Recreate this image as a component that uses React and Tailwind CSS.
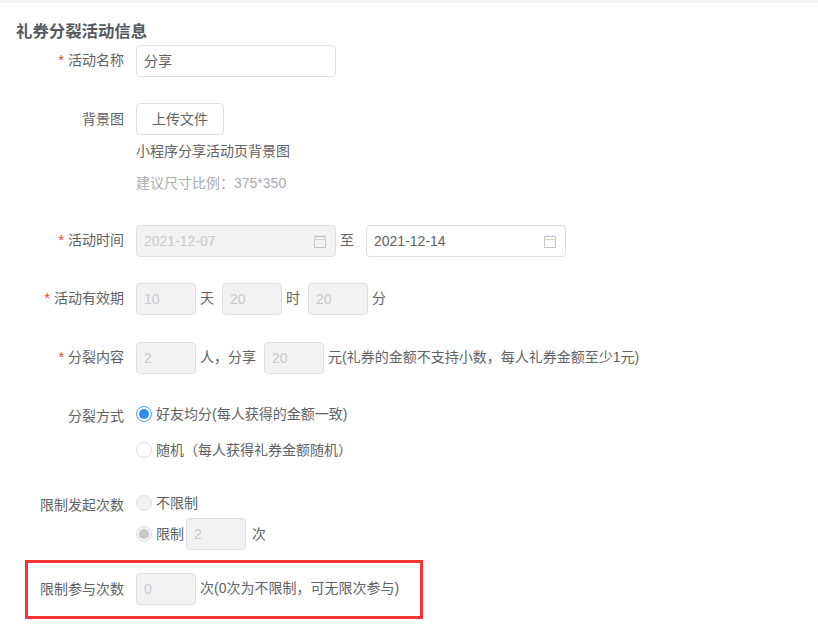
function Label({ required, className = '', children }) {
  return (
    <div className={`w-[124px] shrink-0 text-right leading-8 h-8 ${className}`}>
      {required && <span className="text-[#f5400f] mr-1">*</span>}
      {children}
    </div>
  )
}

function Box({ value, w = 'w-[60px]', disabled = true }) {
  return (
    <div className={`${w} h-8 shrink-0 rounded border border-[#dcdfe6] flex items-center px-[7px] ${disabled ? 'bg-[#f2f2f2] text-[#c8cacf]' : 'bg-white text-[#606266]'}`}>
      {value}
    </div>
  )
}

function Calendar() {
  return (
    <svg width="12" height="13" viewBox="0 0 12 13" fill="none" className="shrink-0" stroke="#c9c4cc" strokeWidth="1">
      <rect x="0.5" y="1.5" width="11" height="11" />
      <path d="M0.5 4.5H11.5" stroke="#d8d2b8" />
      <path d="M3 0V2.5M9 0V2.5" />
    </svg>
  )
}

function DateBox({ value, disabled }) {
  return (
    <div className={`w-[200px] h-8 shrink-0 rounded border border-[#dcdfe6] flex items-center justify-between pl-[7px] pr-[9px] ${disabled ? 'bg-[#f2f2f2] text-[#c8cacf]' : 'bg-white text-[#606266]'}`}>
      <span>{value}</span>
      <Calendar />
    </div>
  )
}

function Radio({ state }) {
  if (state === 'on') {
    return (
      <span className="w-4 h-4 rounded-full border border-[#409eff] bg-white flex items-center justify-center shrink-0">
        <span className="w-[10px] h-[10px] rounded-full bg-[#2d8cf0]" />
      </span>
    )
  }
  if (state === 'disabledOn') {
    return (
      <span className="w-4 h-4 rounded-full border border-[#dcdfe6] bg-[#f2f2f2] flex items-center justify-center shrink-0">
        <span className="w-[10px] h-[10px] rounded-full bg-[#c8c8c8]" />
      </span>
    )
  }
  return <span className={`w-4 h-4 rounded-full border border-[#dcdfe6] shrink-0 ${state === 'disabled' ? 'bg-[#f2f2f2]' : 'bg-white'}`} />
}

export default function App() {
  return (
    <div
      className="w-[818px] h-[634px] overflow-hidden bg-white text-[14px] text-[#606266]"
      style={{ fontFamily: '"Liberation Sans", "Noto Sans CJK SC", sans-serif' }}
    >
      <div className="h-[3px] bg-[#f3f3f3]" />

      <h2 className="ml-4 mt-[18px] h-5 leading-5 text-[16.4px] font-bold text-[#555a62]">礼券分裂活动信息</h2>

      <div className="flex gap-3 mt-[4px]">
        <Label required className="-translate-y-px">活动名称</Label>
        <Box value="分享" w="w-[200px]" disabled={false} />
      </div>

      <div className="flex gap-3 mt-[26px]">
        <Label>背景图</Label>
        <div>
          <button className="w-[88px] h-8 rounded border border-[#dcdfe6] bg-white text-[#606266]">上传文件</button>
          <div className="mt-[6px] h-5 leading-5">小程序分享活动页背景图</div>
          <div className="mt-3 h-5 leading-5 text-[#aaacb0]">建议尺寸比例：375*350</div>
        </div>
      </div>

      <div className="flex gap-3 mt-[32px]">
        <Label required className="-translate-y-px">活动时间</Label>
        <div className="flex items-center">
          <DateBox value="2021-12-07" disabled />
          <span className="w-[30px] pl-1 shrink-0 -translate-y-px">至</span>
          <DateBox value="2021-12-14" />
        </div>
      </div>

      <div className="flex gap-3 mt-[26px]">
        <Label required className="-translate-y-px">活动有效期</Label>
        <div className="flex items-center">
          <Box value="10" />
          <span className="w-[26px] pl-1 shrink-0 -translate-y-px">天</span>
          <Box value="20" />
          <span className="w-[26px] pl-1 shrink-0 -translate-y-px">时</span>
          <Box value="20" />
          <span className="pl-1 -translate-y-px">分</span>
        </div>
      </div>

      <div className="flex gap-3 mt-[27px]">
        <Label required className="-translate-y-px">分裂内容</Label>
        <div className="flex items-center">
          <Box value="2" />
          <span className="w-[68px] pl-1 shrink-0 -translate-y-px">人，分享</span>
          <Box value="20" />
          <span className="pl-1 -translate-y-px">元(礼券的金额不支持小数，每人礼券金额至少1元)</span>
        </div>
      </div>

      <div className="flex gap-3 mt-6">
        <Label className="translate-y-0.5">分裂方式</Label>
        <div>
          <div className="flex items-center gap-1 h-8">
            <Radio state="on" />
            <span>好友均分(每人获得的金额一致)</span>
          </div>
          <div className="flex items-center gap-1 h-8 mt-1">
            <Radio />
            <span>随机（每人获得礼券金额随机）</span>
          </div>
        </div>
      </div>

      <div className="flex gap-3 mt-[21px]">
        <Label className="translate-y-0.5">限制发起次数</Label>
        <div>
          <div className="flex items-center gap-1 h-8">
            <Radio state="disabled" />
            <span>不限制</span>
          </div>
          <div className="flex items-center mt-[-1px]">
            <Radio state="disabledOn" />
            <span className="ml-1 w-[30px]">限制</span>
            <Box value="2" />
            <span className="ml-1.5">次</span>
          </div>
        </div>
      </div>

      <div className="ml-[25px] mt-[10px] w-[398px] h-[59px] border-[3px] border-[#f93434] flex items-start pt-[10px] gap-3">
        <div className="w-[96px] shrink-0 text-right leading-8 h-8">限制参与次数</div>
        <div className="flex items-center">
          <Box value="0" />
          <span className="pl-1 -translate-y-px">次(0次为不限制，可无限次参与)</span>
        </div>
      </div>
    </div>
  )
}
